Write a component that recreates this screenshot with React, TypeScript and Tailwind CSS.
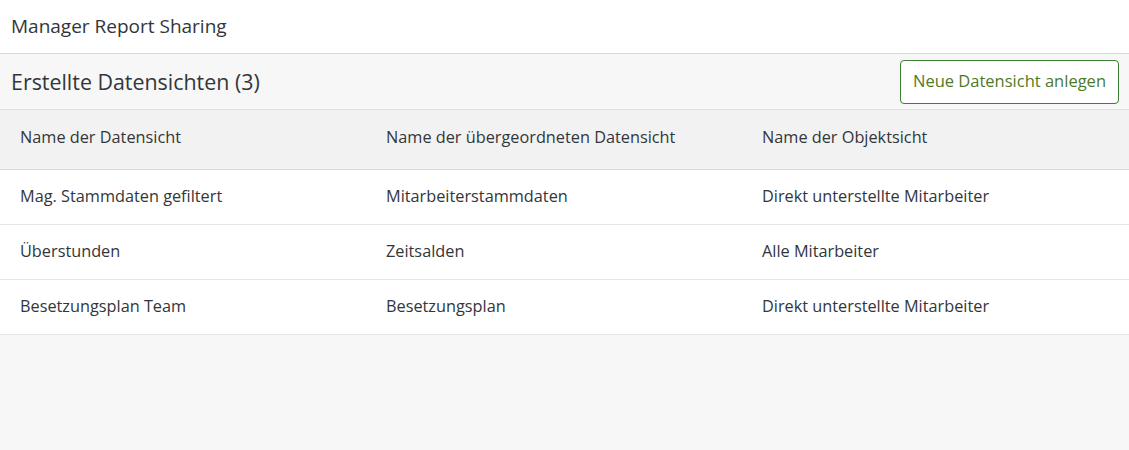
const rows = [
  { name: 'Mag. Stammdaten gefiltert', parent: 'Mitarbeiterstammdaten', object: 'Direkt unterstellte Mitarbeiter' },
  { name: 'Überstunden', parent: 'Zeitsalden', object: 'Alle Mitarbeiter' },
  { name: 'Besetzungsplan Team', parent: 'Besetzungsplan', object: 'Direkt unterstellte Mitarbeiter' },
];

export default function App() {
  return (
    <div className="min-h-[450px] bg-[#f7f7f7] text-[#32363a] font-['Open_Sans',Arial,sans-serif]">
      {/* Page header */}
      <header className="h-[54px] bg-white border-b border-[#d9d9d9] flex items-center px-[11px]">
        <h1 className="text-[19px] leading-none">Manager Report Sharing</h1>
      </header>

      {/* Table toolbar */}
      <div className="h-[56px] flex items-center justify-between pl-[11px] pr-[10px] border-b border-[#e0e0e0]">
        <h2 className="text-[21.4px] leading-none">Erstellte Datensichten (3)</h2>
        <button className="h-[44px] px-[12px] rounded-[4px] border border-[#3b7f32] bg-white text-[16.5px] text-[#4f7a28]">
          Neue Datensicht anlegen
        </button>
      </div>

      {/* Table */}
      <div className="text-[16.3px]">
        <div className="grid grid-cols-[366px_376px_1fr] h-[60px] items-center pb-[5px] bg-[#f2f2f2] border-b border-[#d9d9d9]">
          <div className="pl-[20px]">Name der Datensicht</div>
          <div className="pl-[20px]">Name der übergeordneten Datensicht</div>
          <div className="pl-[20px]">Name der Objektsicht</div>
        </div>
        {rows.map((row, i) => (
          <div
            key={i}
            className="grid grid-cols-[366px_376px_1fr] h-[55px] items-center pb-[2px] bg-white border-b border-[#e5e5e5]"
          >
            <div className="pl-[20px]">{row.name}</div>
            <div className="pl-[20px]">{row.parent}</div>
            <div className="pl-[20px]">{row.object}</div>
          </div>
        ))}
      </div>
    </div>
  );
}
